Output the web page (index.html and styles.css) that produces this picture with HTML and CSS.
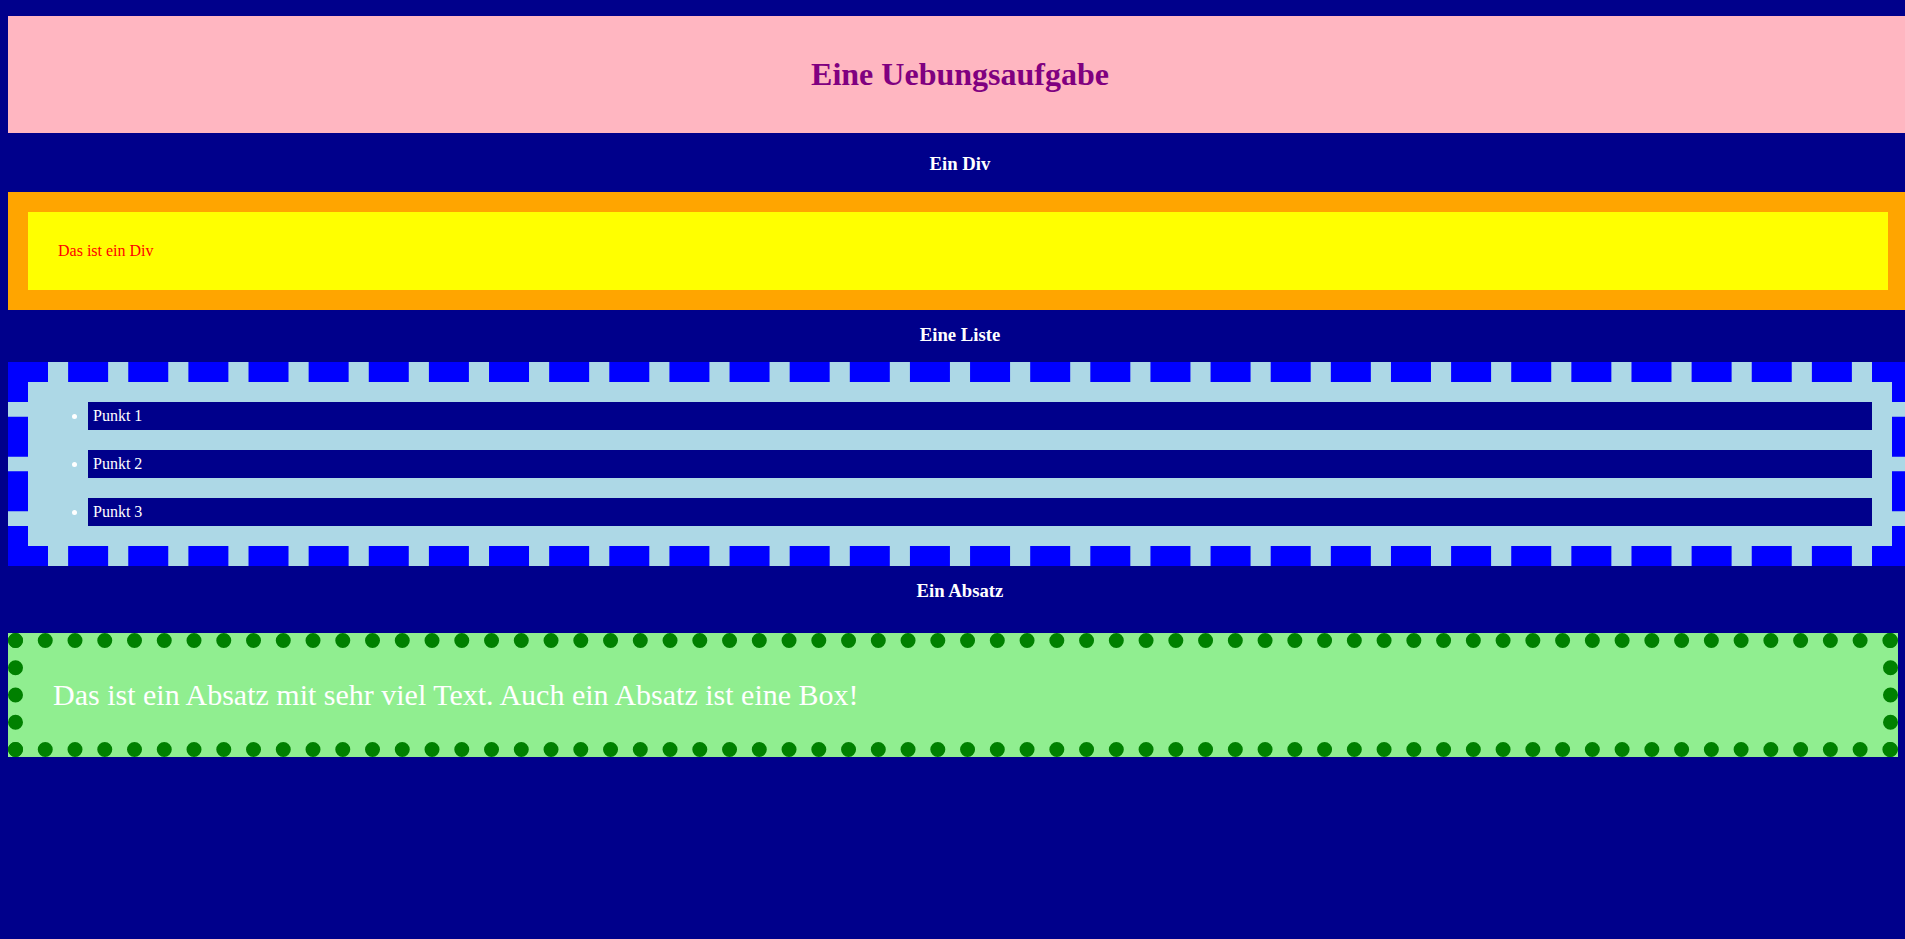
FILE: index.html
```html
<!DOCTYPE html>
<html lang="de">
<head>
<meta charset="utf-8">
<title>Eine Uebungsaufgabe</title>
<link rel="stylesheet" href="styles.css">
</head>
<body>
<h1 class="title">Eine Uebungsaufgabe</h1>
<h3 class="section-heading">Ein Div</h3>
<div class="box-div">Das ist ein Div</div>
<h3 class="section-heading">Eine Liste</h3>
<ul class="box-list">
  <li class="box-list-item">Punkt 1</li>
  <li class="box-list-item">Punkt 2</li>
  <li class="box-list-item">Punkt 3</li>
</ul>
<h3 class="section-heading">Ein Absatz</h3>
<p class="box-paragraph">Das ist ein Absatz mit sehr viel Text. Auch ein Absatz ist eine Box!</p>
</body>
</html>
```

FILE: styles.css
```css
html {
  overflow: hidden;
  background: #00008b;
}

body {
  margin: 0;
  padding: 16px 8px 8px 8px;
  width: 1904px;
  background: #00008b;
  font-family: "Liberation Serif", "Times New Roman", serif;
  font-size: 16px;
  color: #ffffff;
}

.title {
  margin: 0 0 20px 0;
  padding: 40px 0;
  background: #ffb6c1;
  color: #800080;
  font-size: 32px;
  font-weight: bold;
  text-align: center;
  line-height: normal;
}

.section-heading {
  margin: 14px 0 16.5px 0;
  font-size: 18.72px;
  font-weight: bold;
  text-align: center;
  color: #ffffff;
}

.box-div {
  width: 1800px;
  padding: 30px;
  border: 20px solid #ffa500;
  background: #ffff00;
  color: #ff0000;
}

.box-list {
  margin: 0;
  padding: 0 20px 0 60px;
  border: 20px dashed #0000ff;
  background: #add8e6;
  color: #ffffff;
}

.box-list-item {
  margin: 20px 0;
  padding: 5px;
  background: #00008b;
  color: #ffffff;
}

.box-paragraph {
  width: 1800px;
  margin: 31px 0 0 0;
  padding: 30px;
  border: 15px dotted #008000;
  background: #90ee90;
  color: #ffffff;
  font-size: 30px;
}
```
